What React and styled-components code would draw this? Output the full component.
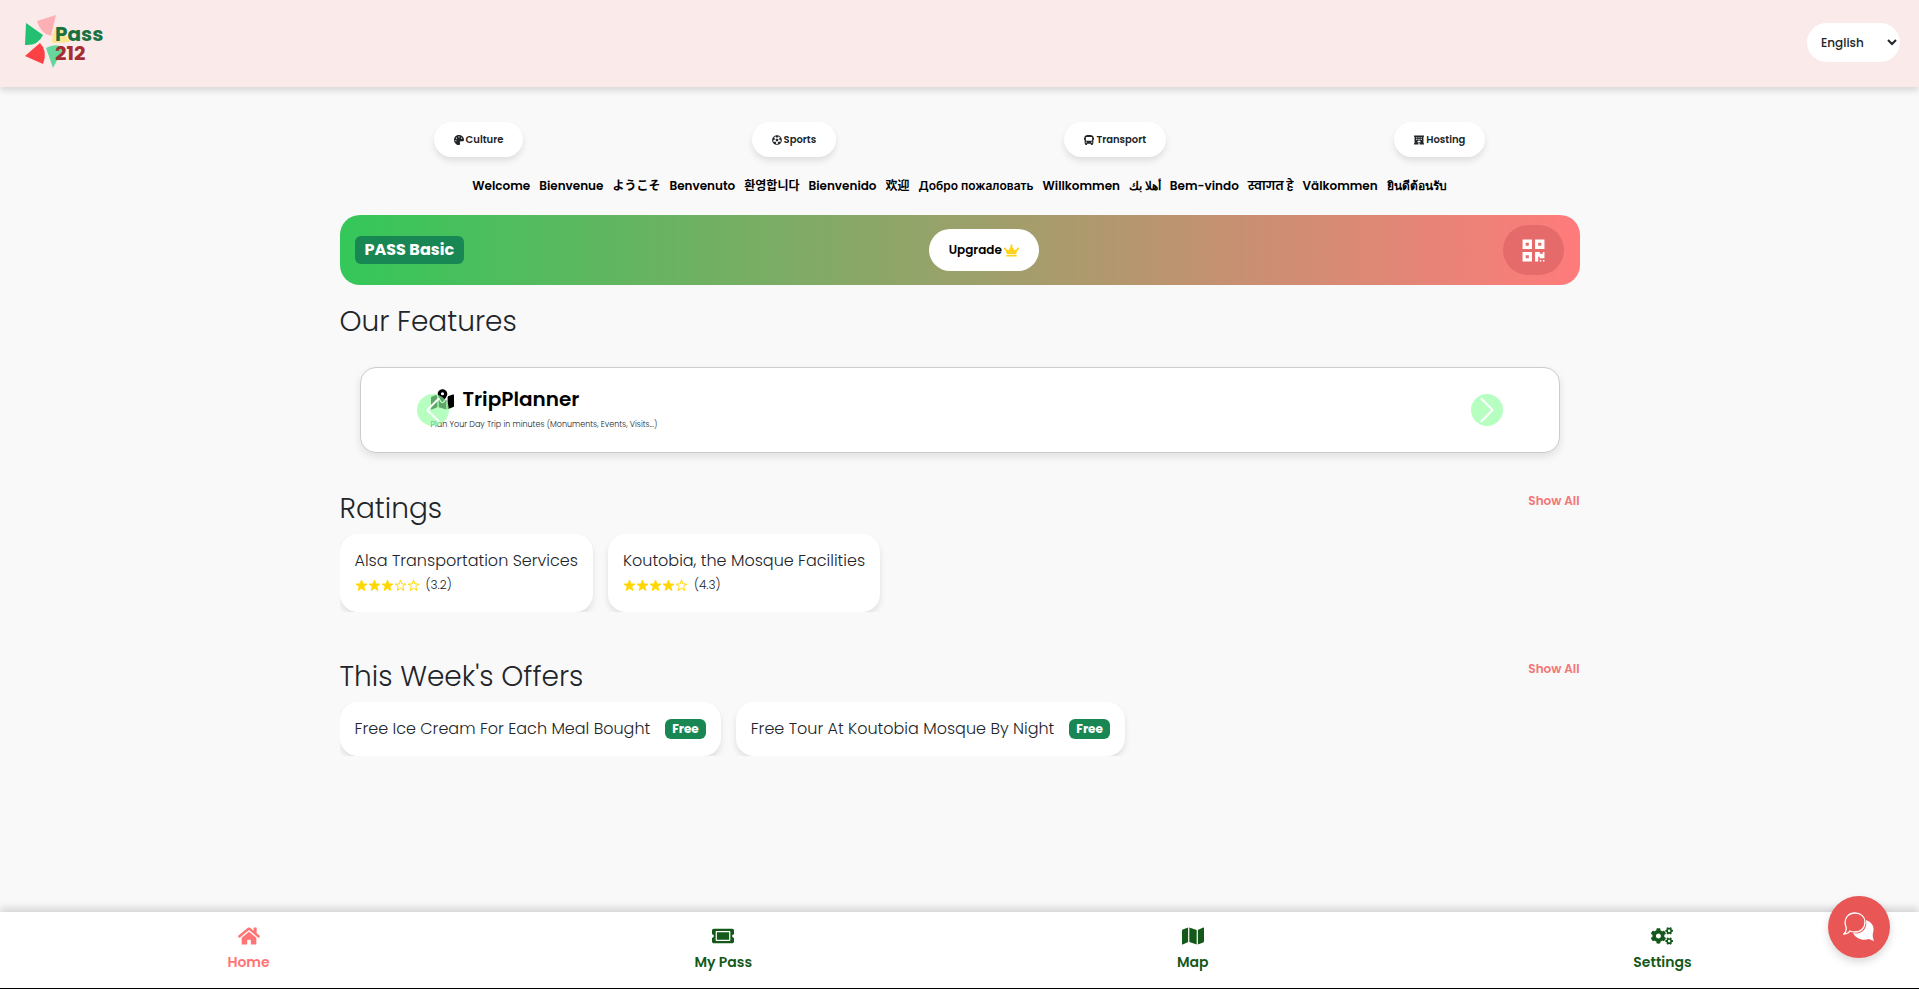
import { useState } from 'react';
import styled, { createGlobalStyle } from 'styled-components';
import { FaPalette, FaBus, FaHotel, FaCrown, FaQrcode, FaHome, FaTicketAlt, FaMap, FaCogs, FaFutbol } from 'react-icons/fa';
import { BsChevronLeft, BsChevronRight } from 'react-icons/bs';
import { FaMapLocationDot } from 'react-icons/fa6';

const GlobalStyle = createGlobalStyle`
  * {
    box-sizing: border-box;
  }
  body {
    margin: 0;
    background: #f9f9f9;
    color: #212529;
    font-family: Poppins, Inter, "Noto Sans", "Noto Sans CJK JP", "Noto Sans CJK KR", sans-serif;
  }
  button, select {
    font-family: inherit;
  }
  h1, h2, h3, p, ul {
    margin: 0;
    padding: 0;
  }
`;

const Page = styled.div`
  min-height: 100vh;
  display: flex;
  flex-direction: column;
`;

const Header = styled.header`
  height: 87px;
  padding: 0 19px 3px 24px;
  display: flex;
  align-items: center;
  justify-content: space-between;
  background: #faeaea;
  box-shadow: 0 4px 6px rgba(0, 0, 0, 0.12);
`;

const LogoLink = styled.a`
  display: flex;
`;

const LanguageSelect = styled.select`
  width: 93px;
  height: 39px;
  padding: 0 0 0 10px;
  border: none;
  border-radius: 20px;
  background: #fff;
  color: #212529;
  font-size: 12px;
  font-weight: 500;
`;

const Main = styled.main`
  flex: 1;
  width: 100%;
  max-width: 1240px;
  margin: 0 auto;
  padding-top: 35px;
`;

const Categories = styled.div`
  display: flex;
  justify-content: space-around;
  margin: 0 -20px;
`;

const CategoryButton = styled.button`
  display: flex;
  align-items: center;
  gap: 2px;
  height: 35px;
  padding: 0 20px;
  border: none;
  border-radius: 20px;
  background: #fff;
  color: #212529;
  font-size: 10px;
  font-weight: 600;
  box-shadow: 0 4px 6px rgba(0, 0, 0, 0.1);
`;

const Greetings = styled.ul`
  display: flex;
  justify-content: center;
  gap: 9px;
  margin-top: 19px;
  height: 20px;
  line-height: 20px;
  list-style: none;
  white-space: nowrap;
  color: #000;
  font-size: 12px;
  font-weight: 600;
`;

const PassBanner = styled.section`
  display: flex;
  align-items: center;
  justify-content: space-between;
  height: 70px;
  margin-top: 19px;
  padding: 0 15px;
  border-radius: 20px;
  background: linear-gradient(to right, #34c759, #ff7b7b);
`;

const PassBadge = styled.span`
  height: 28px;
  padding: 0 10px;
  border-radius: 6px;
  background: #198754;
  color: #fff;
  font-size: 16px;
  font-weight: 700;
  line-height: 27px;
`;

const UpgradeButton = styled.button`
  display: flex;
  align-items: center;
  gap: 2px;
  height: 42px;
  padding: 0 20px;
  border: none;
  border-radius: 21px;
  background: #fff;
  color: #000;
  font-size: 12px;
  font-weight: 600;
  svg {
    color: #ffd21e;
    font-size: 15px;
  }
`;

const QrButton = styled.button`
  display: flex;
  align-items: center;
  justify-content: center;
  width: 61px;
  height: 50px;
  border: none;
  border-radius: 25px;
  background: #e56b6b;
  color: #fff;
  font-size: 25px;
`;

const Title = styled.h2`
  font-size: 28px;
  font-weight: 300;
  line-height: 34px;
`;

const Features = styled.section`
  padding-top: 20px;
`;

const FeatureCard = styled.div`
  position: relative;
  height: 86px;
  margin: 28px 20px 0;
  padding: 19px 70px;
  border: 1px solid #ccc;
  border-radius: 16px;
  background: #fff;
  box-shadow: 0 4px 8px rgba(0, 0, 0, 0.1);
`;

const FeatureTitle = styled.h3`
  display: flex;
  align-items: center;
  gap: 9px;
  color: #000;
  font-size: 20px;
  font-weight: 600;
  line-height: 24px;
`;

const FeatureText = styled.p`
  margin-top: 7px;
  font-size: 8px;
  font-weight: 300;
  line-height: 14px;
`;

const ArrowButton = styled.button`
  position: absolute;
  top: 26px;
  ${props => props.$side}: 56px;
  display: flex;
  align-items: center;
  justify-content: center;
  width: 32px;
  height: 32px;
  padding: 0;
  border: none;
  border-radius: 50%;
  background: rgba(144, 255, 160, 0.65);
  color: #fff;
  font-size: 30px;
`;

const ListSection = styled.section`
  padding-top: ${props => props.$top}px;
`;

const ListHeader = styled.div`
  display: flex;
  justify-content: space-between;
  align-items: flex-start;
`;

const ShowAll = styled.a`
  color: #f47575;
  font-size: 12px;
  font-weight: 600;
  line-height: 18px;
  text-decoration: none;
`;

// clips the bottom of the card shadows
const CardRow = styled.div`
  display: flex;
  gap: 15px;
  overflow: hidden;
  margin-top: 8px;
`;

const Card = styled.article`
  padding: 16px 15px;
  border-radius: 18px;
  background: #fff;
  box-shadow: 0 4px 6px rgba(0, 0, 0, 0.1);
`;

const RatingCard = styled(Card)`
  height: 78px;
`;

const OfferCard = styled(Card)`
  display: flex;
  align-items: center;
  gap: 15px;
  height: 54px;
`;

const CardTitle = styled.h3`
  font-size: 16px;
  font-weight: 300;
  line-height: 22px;
`;

const Stars = styled.div`
  display: flex;
  align-items: center;
  margin-top: 4px;
  font-size: 12px;
  font-weight: 300;
  line-height: 18px;
  span {
    margin-left: 6px;
  }
`;

const FreeBadge = styled.span`
  height: 20px;
  padding: 0 7px;
  border-radius: 6px;
  background: #198754;
  color: #fff;
  font-size: 12px;
  font-weight: 700;
  line-height: 20px;
`;

const BottomNav = styled.nav`
  display: flex;
  justify-content: space-around;
  height: 77px;
  padding: 13px 15px 0;
  border-bottom: 1px solid #000;
  background: #fff;
  box-shadow: 0 -4px 8px rgba(0, 0, 0, 0.15);
`;

const NavLink = styled.a`
  display: flex;
  flex-direction: column;
  align-items: center;
  gap: 3px;
  color: ${props => props.$active ? '#ff7575' : '#14591a'};
  font-size: 14px;
  font-weight: 600;
  line-height: 24px;
  text-decoration: none;
  svg {
    font-size: 22px;
  }
`;

const ChatButton = styled.button`
  position: fixed;
  right: 29px;
  bottom: 31px;
  display: flex;
  align-items: center;
  justify-content: center;
  width: 62px;
  height: 62px;
  padding: 0;
  border: none;
  border-radius: 50%;
  background: #e85656;
  box-shadow: 0 4px 8px rgba(0, 0, 0, 0.15);
`;

const categories = [
  { icon: FaPalette, label: 'Culture' },
  { icon: FaFutbol, label: 'Sports' },
  { icon: FaBus, label: 'Transport' },
  { icon: FaHotel, label: 'Hosting' },
];

const greetings = ['Welcome', 'Bienvenue', 'ようこそ', 'Benvenuto', '환영합니다', 'Bienvenido', '欢迎', 'Добро пожаловать', 'Willkommen', 'أهلا بك', 'Bem-vindo', 'स्वागत हे', 'Välkommen', 'ยินดีต้อนรับ'];

const ratings = [
  { name: 'Alsa Transportation Services', score: 3.2 },
  { name: 'Koutobia, the Mosque Facilities', score: 4.3 },
];

const offers = ['Free Ice Cream For Each Meal Bought', 'Free Tour At Koutobia Mosque By Night'];

const links = [
  { icon: FaHome, label: 'Home', active: true },
  { icon: FaTicketAlt, label: 'My Pass' },
  { icon: FaMap, label: 'Map' },
  { icon: FaCogs, label: 'Settings' },
];

function Logo() {
  return (
    <svg width="82" height="56" viewBox="0 0 82 56" role="img" aria-label="Pass 212">
      <path d="M13 7 L32 1 L27 22 Q16 19 13 7Z" fill="#fdb0b3" />
      <path d="M2 9 L19 21 Q14 32 1 31Z" fill="#22c070" />
      <path d="M1 42 L16 29 Q24 37 19 50Z" fill="#fb4144" />
      <path d="M22 34 Q30 29 40 33 L29 54Z" fill="#65d79d" />
      <path d="M28 29 Q28 14 36 12 L46 28Z" fill="#fde58f" />
      <text x="31" y="27" fontSize="20" fontWeight="700" fill="#19713f">Pass</text>
      <text x="31" y="46" fontSize="20" fontWeight="700" fill="#a52c30">212</text>
    </svg>
  );
}

function Star({ filled }) {
  return (
    <svg width="13" height="13" viewBox="0 0 24 24" aria-hidden="true">
      <path
        d="M12 2 L14.6 9.2 L22 9.4 L16.1 14 L18.2 21.2 L12 17 L5.8 21.2 L7.9 14 L2 9.4 L9.4 9.2Z"
        fill={filled ? '#ffd700' : 'none'}
        stroke="#ffd700"
        strokeWidth="1.8"
      />
    </svg>
  );
}

function ChatIcon() {
  return (
    <svg width="32" height="32" viewBox="0 0 32 32" aria-hidden="true">
      <path d="M23 9 C29 11 32 16 30 22 Q29 25 31 30 Q28 29 26 28 C20 30 13 28 10 22 C18 24 25 18 23 9Z" fill="#fff" />
      <path d="M12 2 C18 2 22 6 22 11 C22 17 18 21 12 21 Q9 21 7 20 Q5 23 1 23 Q4 20 3 16 C0 8 5 2 12 2Z" fill="#e85656" stroke="#fff" strokeWidth="1.3" />
    </svg>
  );
}

function App() {
  const [language, setLanguage] = useState('en');

  return (
    <Page>
      <GlobalStyle />
      <Header>
        <LogoLink href="#home"><Logo /></LogoLink>
        <LanguageSelect aria-label="Language" value={language} onChange={e => setLanguage(e.target.value)}>
          <option value="en">English</option>
          <option value="fr">Français</option>
        </LanguageSelect>
      </Header>

      <Main>
        <Categories>
          {categories.map(({ icon: Icon, label }) => (
            <CategoryButton key={label} type="button"><Icon />{label}</CategoryButton>
          ))}
        </Categories>
        <Greetings>
          {greetings.map(text => <li key={text}>{text}</li>)}
        </Greetings>

        <PassBanner>
          <PassBadge>PASS Basic</PassBadge>
          <UpgradeButton type="button">Upgrade <FaCrown /></UpgradeButton>
          <QrButton type="button" aria-label="QR code"><FaQrcode /></QrButton>
        </PassBanner>

        <Features>
          <Title>Our Features</Title>
          <FeatureCard>
            <FeatureTitle><FaMapLocationDot size={23} />TripPlanner</FeatureTitle>
            <FeatureText>Plan Your Day Trip in minutes (Monuments, Events, Visits...)</FeatureText>
            <ArrowButton $side="left" type="button" aria-label="Previous"><BsChevronLeft /></ArrowButton>
            <ArrowButton $side="right" type="button" aria-label="Next"><BsChevronRight /></ArrowButton>
          </FeatureCard>
        </Features>

        <ListSection $top={39}>
          <ListHeader>
            <Title>Ratings</Title>
            <ShowAll href="#ratings">Show All</ShowAll>
          </ListHeader>
          <CardRow>
            {ratings.map(({ name, score }) => (
              <RatingCard key={name}>
                <CardTitle>{name}</CardTitle>
                <Stars>
                  {[1, 2, 3, 4, 5].map(n => <Star key={n} filled={n <= score} />)}
                  <span>({score})</span>
                </Stars>
              </RatingCard>
            ))}
          </CardRow>
        </ListSection>

        <ListSection $top={48}>
          <ListHeader>
            <Title>This Week's Offers</Title>
            <ShowAll href="#offers">Show All</ShowAll>
          </ListHeader>
          <CardRow>
            {offers.map(offer => (
              <OfferCard key={offer}>
                <CardTitle>{offer}</CardTitle>
                <FreeBadge>Free</FreeBadge>
              </OfferCard>
            ))}
          </CardRow>
        </ListSection>
      </Main>

      <BottomNav>
        {links.map(({ icon: Icon, label, active }) => (
          <NavLink key={label} href="#" $active={active}><Icon />{label}</NavLink>
        ))}
      </BottomNav>
      <ChatButton type="button" aria-label="Chat"><ChatIcon /></ChatButton>
    </Page>
  );
}

export default App;
